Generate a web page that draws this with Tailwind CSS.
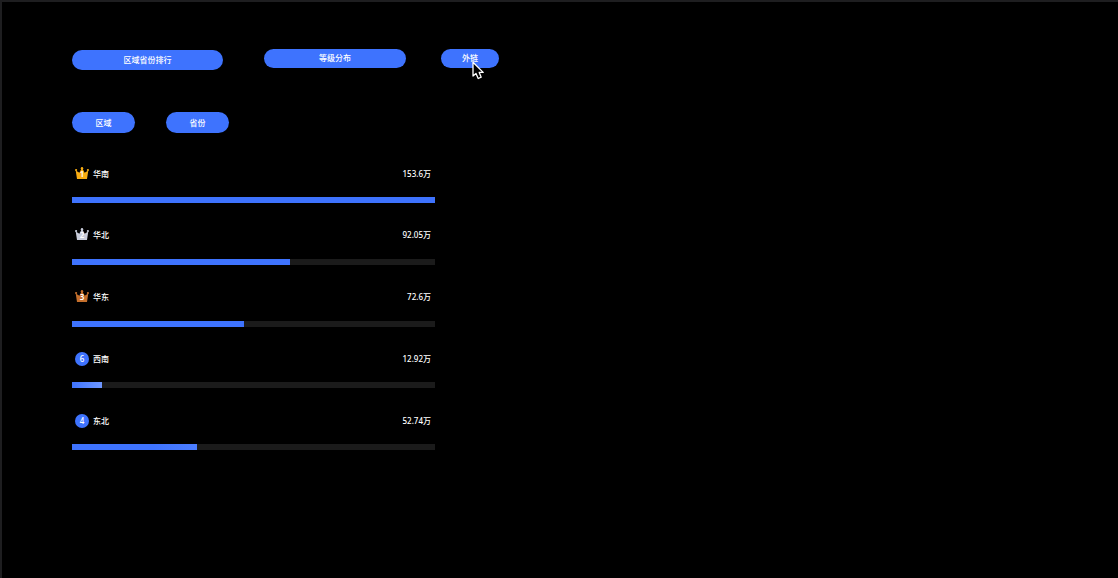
<!DOCTYPE html>
<html lang="zh-CN">
<head>
<meta charset="utf-8">
<meta name="viewport" content="width=device-width, initial-scale=1">
<title>区域省份排行</title>
<script src="https://cdn.jsdelivr.net/npm/@tailwindcss/browser@4"></script>
</head>
<body class="min-h-screen bg-black text-white text-[8px] leading-3 font-medium font-['Noto_Sans','Noto_Sans_CJK_SC',sans-serif] border-t-2 border-l-2 border-[#1e1e20]">
<main class="pl-[70px] pr-6 pt-[47px] pb-8">
  <nav class="flex items-start">
    <button type="button" class="mt-px h-5 w-[151px] rounded-full bg-[#3e73fe]">区域省份排行</button>
    <button type="button" class="ml-[41px] h-[19px] w-[142px] rounded-full bg-[#3e73fe] pb-px">等级分布</button>
    <div class="relative ml-[35px]">
      <button type="button" class="block h-[19px] w-[58px] rounded-full bg-[#3e73fe] pb-px">外链</button>
      <svg class="absolute left-[31px] top-3 h-[19px] w-3" viewBox="0 0 12 19" aria-hidden="true">
        <path d="M1 1.2V15L4 12.4L6.2 17.5L9.2 16.2L7.2 11.4H11.2Z" fill="#000" stroke="#fff" stroke-width="1.3" stroke-linejoin="round"/>
      </svg>
    </div>
  </nav>
  <div class="mt-[42px] flex gap-[31px]">
    <button type="button" class="h-[21px] w-[63px] rounded-full bg-[#3e73fe]">区域</button>
    <button type="button" class="h-[21px] w-[63px] rounded-full bg-[#3e73fe]">省份</button>
  </div>
  <ol class="mt-[33px] flex min-h-[284px] w-full max-w-[363px] flex-col justify-between">
    <li>
      <div class="flex h-[15px] items-center pl-[3px] pr-1">
        <svg class="mr-1 h-[14px] w-[14px] shrink-0" viewBox="0 0 14 14" role="img" aria-label="1">
          <g fill="#f9ad13"><path d="M2 12L.7 3.6L4.4 5.8L6.5 1.6H7.5L9.6 5.8L13.3 3.6L12 12Z"/><circle cx="1.1" cy="3" r="1.1"/><circle cx="7" cy="1.2" r="1.2"/><circle cx="12.9" cy="3" r="1.1"/></g>
          <text x="7" y="10" text-anchor="middle" font-size="8" font-weight="600" fill="#fff">1</text>
        </svg>
        <span>华南</span><span class="ml-auto">153.6万</span>
      </div>
      <div class="mt-4 h-1.5 bg-[#1b1b1b]"><div class="h-full bg-[#3e73fe]" style="width:100%"></div></div>
    </li>
    <li>
      <div class="flex h-[15px] items-center pl-[3px] pr-1">
        <svg class="mr-1 h-[14px] w-[14px] shrink-0" viewBox="0 0 14 14" role="img" aria-label="2">
          <g fill="#c9cddb"><path d="M2 12L.7 3.6L4.4 5.8L6.5 1.6H7.5L9.6 5.8L13.3 3.6L12 12Z"/><circle cx="1.1" cy="3" r="1.1"/><circle cx="7" cy="1.2" r="1.2"/><circle cx="12.9" cy="3" r="1.1"/></g>
          <text x="7" y="10" text-anchor="middle" font-size="8" font-weight="600" fill="#fff">2</text>
        </svg>
        <span>华北</span><span class="ml-auto">92.05万</span>
      </div>
      <div class="mt-4 h-1.5 bg-[#1b1b1b]"><div class="h-full bg-[#3e73fe]" style="width:60%"></div></div>
    </li>
    <li>
      <div class="flex h-[15px] items-center pl-[3px] pr-1">
        <svg class="mr-1 h-[14px] w-[14px] shrink-0" viewBox="0 0 14 14" role="img" aria-label="3">
          <g fill="#c56f2c"><path d="M2 12L.7 3.6L4.4 5.8L6.5 1.6H7.5L9.6 5.8L13.3 3.6L12 12Z"/><circle cx="1.1" cy="3" r="1.1"/><circle cx="7" cy="1.2" r="1.2"/><circle cx="12.9" cy="3" r="1.1"/></g>
          <text x="7" y="10" text-anchor="middle" font-size="8" font-weight="600" fill="#fff">3</text>
        </svg>
        <span>华东</span><span class="ml-auto">72.6万</span>
      </div>
      <div class="mt-4 h-1.5 bg-[#1b1b1b]"><div class="h-full bg-[#3e73fe]" style="width:47.3%"></div></div>
    </li>
    <li>
      <div class="flex h-[15px] items-center pl-[3px] pr-1">
        <span class="mr-1 flex size-[14px] shrink-0 items-center justify-center rounded-full bg-[#3e73fe]">6</span>
        <span>西南</span><span class="ml-auto">12.92万</span>
      </div>
      <div class="mt-4 h-1.5 bg-[#1b1b1b]"><div class="h-full bg-linear-to-r from-[#3e73fe] to-[#6f97ff]" style="width:8.4%"></div></div>
    </li>
    <li>
      <div class="flex h-[15px] items-center pl-[3px] pr-1">
        <span class="mr-1 flex size-[14px] shrink-0 items-center justify-center rounded-full bg-[#3e73fe]">4</span>
        <span>东北</span><span class="ml-auto">52.74万</span>
      </div>
      <div class="mt-4 h-1.5 bg-[#1b1b1b]"><div class="h-full bg-linear-to-r from-[#3e73fe] from-65% to-[#4b7dff]" style="width:34.3%"></div></div>
    </li>
  </ol>
</main>
</body>
</html>
